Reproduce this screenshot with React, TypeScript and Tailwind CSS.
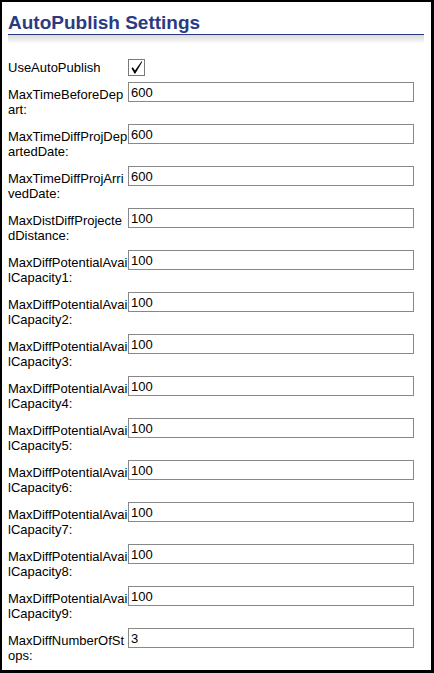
import React from 'react';

type Field = {
  label: string;
  value: string;
};

const fields: Field[] = [
  { label: 'MaxTimeBeforeDepart:', value: '600' },
  { label: 'MaxTimeDiffProjDepartedDate:', value: '600' },
  { label: 'MaxTimeDiffProjArrivedDate:', value: '600' },
  { label: 'MaxDistDiffProjectedDistance:', value: '100' },
  { label: 'MaxDiffPotentialAvailCapacity1:', value: '100' },
  { label: 'MaxDiffPotentialAvailCapacity2:', value: '100' },
  { label: 'MaxDiffPotentialAvailCapacity3:', value: '100' },
  { label: 'MaxDiffPotentialAvailCapacity4:', value: '100' },
  { label: 'MaxDiffPotentialAvailCapacity5:', value: '100' },
  { label: 'MaxDiffPotentialAvailCapacity6:', value: '100' },
  { label: 'MaxDiffPotentialAvailCapacity7:', value: '100' },
  { label: 'MaxDiffPotentialAvailCapacity8:', value: '100' },
  { label: 'MaxDiffPotentialAvailCapacity9:', value: '100' },
  { label: 'MaxDiffNumberOfStops:', value: '3' },
];

function CheckBox() {
  return (
    <div className="flex h-[17px] w-[17px] items-center justify-center border border-[#7a7a7a] bg-white">
      <svg width="15" height="15" viewBox="0 0 15 15">
        <polygon
          points="2.5,8.2 3.8,7.2 6,10.6 12.6,1.2 13.3,1.8 6.4,13.6 5.4,13.6"
          fill="#000"
        />
      </svg>
    </div>
  );
}

function FieldRow({ field }: { field: Field }) {
  return (
    <div className="mt-[7px] flex items-start">
      <label className="w-[120px] break-all pt-[5px] text-[13px] leading-[15px] text-black">
        {field.label}
      </label>
      <input
        type="text"
        readOnly
        value={field.value}
        className="h-[20px] w-[286px] border border-[#888] bg-white px-[2px] text-[13px] text-black outline-none"
      />
    </div>
  );
}

export default function App() {
  return (
    <div className="box-border h-[673px] w-[434px] overflow-hidden border-b-[3px] border-l-2 border-r-[3px] border-t-2 border-black bg-white pl-[6px] pt-[10px] font-['Liberation_Sans',Arial,sans-serif]">
      <h1 className="w-[416px] border-b border-[#2b3a82] text-[19px] font-bold leading-[22px] text-[#2b3a82]">
        AutoPublish Settings
      </h1>
      <div className="h-[9px] w-[416px] bg-gradient-to-b from-[#dadada] to-white" />

      <div className="mt-[15px] flex items-start">
        <label className="w-[120px] pt-[1px] text-[13px] leading-[15px] text-black">
          UseAutoPublish
        </label>
        <CheckBox />
      </div>

      <div className="-mt-[1px]">
        {fields.map((f) => (
          <FieldRow key={f.label} field={f} />
        ))}
      </div>
    </div>
  );
}
